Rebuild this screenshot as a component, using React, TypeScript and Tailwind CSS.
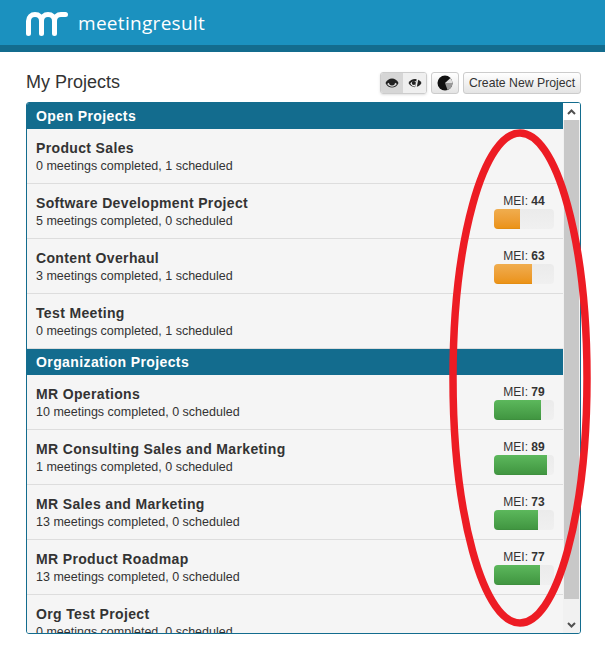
const openProjects = [
  { name: 'Product Sales', meta: '0 meetings completed, 1 scheduled' },
  { name: 'Software Development Project', meta: '5 meetings completed, 0 scheduled', mei: 44 },
  { name: 'Content Overhaul', meta: '3 meetings completed, 1 scheduled', mei: 63 },
  { name: 'Test Meeting', meta: '0 meetings completed, 1 scheduled' },
];

const orgProjects = [
  { name: 'MR Operations', meta: '10 meetings completed, 0 scheduled', mei: 79 },
  { name: 'MR Consulting Sales and Marketing', meta: '1 meetings completed, 0 scheduled', mei: 89 },
  { name: 'MR Sales and Marketing', meta: '13 meetings completed, 0 scheduled', mei: 73 },
  { name: 'MR Product Roadmap', meta: '13 meetings completed, 0 scheduled', mei: 77 },
  { name: 'Org Test Project', meta: '0 meetings completed, 0 scheduled' },
];

function Logo() {
  return (
    <svg width="42" height="24" viewBox="0 0 42 24" fill="none" stroke="white" strokeWidth="5" strokeLinecap="round">
      <path d="M2.500 21.500V9C2.500 5 5.500 2.500 9 2.500C13 2.500 15.500 5 15.500 9V21.500" />
      <path d="M15.500 9C15.500 5 18.500 2.500 22 2.500C26 2.500 28.500 5 28.500 9V21.500" />
      <path d="M28.500 9C28.500 5 31.500 2.500 35 2.500H39.500" />
    </svg>
  );
}

function EyeIcon() {
  return (
    <svg width="14" height="12" viewBox="0 0 14 12">
      <path d="M0.500 6C3 0 11 0 13.500 6C11 12 3 12 0.500 6Z" fill="#222" />
      <path d="M2.200 7C4.500 10.500 9.500 10.500 11.800 7C10.500 4.800 3.500 4.800 2.200 7Z" fill="#d8d8d8" />
      <circle cx="7" cy="5.500" r="3" fill="#222" />
    </svg>
  );
}

function EyeOffIcon() {
  return (
    <svg width="14" height="14" viewBox="0 0 14 14">
      <path d="M0.500 7C3 1.500 11 1.500 13.500 7C11 12.500 3 12.500 0.500 7Z" fill="#222" />
      <path d="M2.300 7.500C4 10.500 6 10.500 7 10.500L8 5C5.500 4.700 3.300 5.600 2.300 7.500Z" fill="#efefef" />
      <circle cx="5.800" cy="7" r="2" fill="#222" />
      <path d="M10 0.500L7.500 13.500" stroke="#efefef" strokeWidth="1.600" />
    </svg>
  );
}

function PieIcon() {
  return (
    <svg width="16" height="16" viewBox="0 0 16 16">
      <circle cx="8" cy="8" r="7.500" fill="#111" />
      <path d="M8 8L13.500 2.900A7.500 7.500 0 0 1 15.500 8Z" fill="#ddd" />
      <path d="M8 8L15.500 8A7.500 7.500 0 0 1 10.500 15Z" fill="#999" />
    </svg>
  );
}

function Bar({ mei }: { mei: number }) {
  const color =
    mei < 70
      ? 'bg-gradient-to-b from-[#f0ad4e] to-[#eb9316] border-b border-[#e38d13]'
      : 'bg-gradient-to-b from-[#5cb85c] to-[#419641] border-b border-[#3e8f3e]';
  return (
    <div className="flex w-[60px] flex-col items-center">
      <div className="text-xs leading-[14px] text-[#333]">
        MEI: <span className="font-bold">{mei}</span>
      </div>
      <div className="mt-[1px] h-5 w-full overflow-hidden rounded bg-gradient-to-b from-[#ebebeb] to-[#f0f0f0]">
        <div className={`h-full ${color}`} style={{ width: `${mei}%` }} />
      </div>
    </div>
  );
}

function Row({ project }: { project: { name: string; meta: string; mei?: number } }) {
  return (
    <div className="flex h-[55px] shrink-0 items-center justify-between border-b border-[#ddd] bg-[#f5f5f5] pl-[9px] pr-[9px]">
      <div className="mt-[1px]">
        <div className="text-sm font-bold leading-[18px] tracking-[0.35px] text-[#333]">{project.name}</div>
        <div className="text-[12.500px] leading-[18px] text-[#333]">{project.meta}</div>
      </div>
      {project.mei && (
        <div className="mt-[1px]">
          <Bar mei={project.mei} />
        </div>
      )}
    </div>
  );
}

function SectionHeader({ title }: { title: string }) {
  return (
    <div className="flex h-[26px] shrink-0 items-center bg-[#136c8e] pl-[9px] text-sm font-bold tracking-[0.4px] text-white">
      {title}
    </div>
  );
}

export default function App() {
  return (
    <div className="relative h-[649px] w-[605px] overflow-hidden bg-white font-['Liberation_Sans',Arial,sans-serif]">
      <header className="flex h-[52px] items-start border-b-[7px] border-[#136c8e] bg-[#1b91bf] pl-[26px] pt-[12px]">
        <Logo />
        <span className="ml-[10px] font-['Open_Sans',sans-serif] text-[19px] leading-[22px] tracking-[0.3px] text-white">
          meetingresult
        </span>
      </header>

      <main className="pl-[26px] pr-[24px] pt-[14px]">
        <div className="flex h-[31px] items-center justify-between">
          <h1 className="text-lg leading-[24px] text-[#333]">My Projects</h1>
          <div className="mt-[3px] flex items-center">
            <div className="flex h-[22px] overflow-hidden rounded-[3px] border border-[#ccc] shadow-sm">
              <button className="flex w-[22px] items-center justify-center bg-[#d6d6d6]">
                <EyeIcon />
              </button>
              <button className="flex w-[23px] items-center justify-center bg-[#efefef]">
                <EyeOffIcon />
              </button>
            </div>
            <button className="ml-[4px] flex h-[22px] w-[28px] items-center justify-center rounded-[3px] border border-[#ccc] bg-gradient-to-b from-white to-[#e4e4e4]">
              <PieIcon />
            </button>
            <button className="ml-[4px] h-[22px] w-[118px] rounded-[3px] border border-[#ccc] bg-gradient-to-b from-white to-[#e4e4e4] text-[12.250px] text-[#333]">
              Create New Project
            </button>
          </div>
        </div>

        <section className="relative mt-[5px] flex h-[532px] overflow-hidden rounded-[3px] border border-[#136c8e]">
          <div className="flex min-w-0 flex-1 flex-col">
            <SectionHeader title="Open Projects" />
            {openProjects.map((p) => (
              <Row key={p.name} project={p} />
            ))}
            <SectionHeader title="Organization Projects" />
            {orgProjects.map((p) => (
              <Row key={p.name} project={p} />
            ))}
          </div>
          <div className="flex w-[17px] shrink-0 flex-col bg-[#f1f1f1]">
            <div className="flex h-[17px] items-center justify-center bg-white">
              <svg width="9" height="6" viewBox="0 0 9 6" fill="none" stroke="#505050" strokeWidth="2">
                <path d="M1 5L4.500 1.500L8 5" />
              </svg>
            </div>
            <div className="mx-[1px] h-[479px] bg-[#c8c8c8]" />
            <div className="mt-auto flex h-[17px] items-center justify-center">
              <svg width="9" height="6" viewBox="0 0 9 6" fill="none" stroke="#505050" strokeWidth="2">
                <path d="M1 1L4.500 4.500L8 1" />
              </svg>
            </div>
          </div>
        </section>
      </main>

      {/* hand-drawn red annotation over the list */}
      <svg className="pointer-events-none absolute left-0 top-0" width="605" height="649" fill="none">
        <ellipse cx="520" cy="378" rx="67" ry="245" stroke="#ed1c24" strokeWidth="7.500" />
      </svg>
    </div>
  );
}
